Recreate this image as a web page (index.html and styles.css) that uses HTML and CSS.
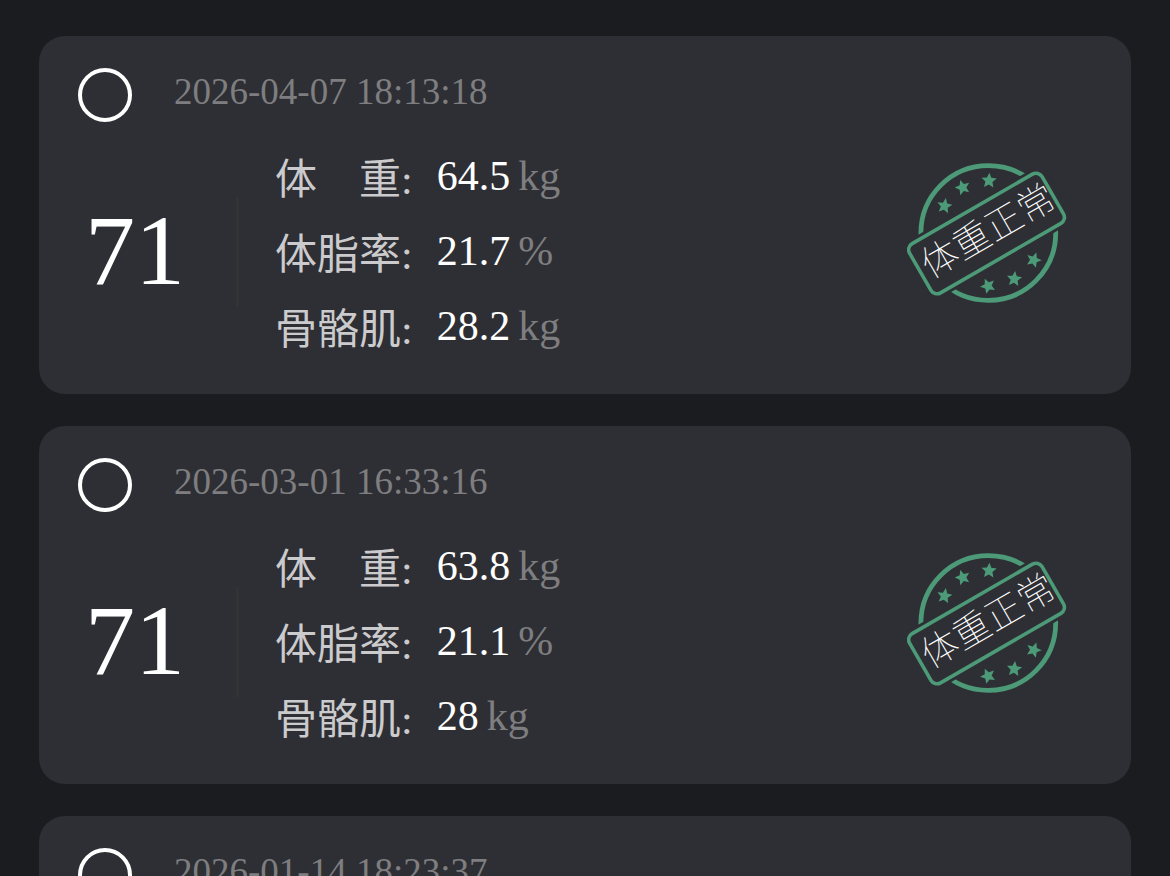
FILE: index.html
```
<!DOCTYPE html>
<html lang="zh-CN">
<head>
<meta charset="utf-8">
<meta name="viewport" content="width=device-width, initial-scale=1">
<title>体重记录</title>
<link rel="stylesheet" href="styles.css">
</head>
<body>
<svg class="defs" width="0" height="0" aria-hidden="true">
  <defs>
    <path id="star" d="M0-8 2.2-3 7.6-2.5 3.5 1.1 4.7 6.5 0 3.7-4.7 6.5-3.5 1.1-7.6-2.5-2.2-3Z"/>
    <symbol id="stamp" viewBox="0 0 160 142">
      <circle class="stamp-line" cx="81.3" cy="71" r="67.4" stroke-width="4.8"/>
      <g transform="rotate(-30 79.7 71.4)">
        <rect class="stamp-gap" x="-3" y="38.4" width="165.4" height="66"/>
        <rect class="stamp-line" x="3" y="43" width="153" height="56.8" rx="7" stroke-width="3.6"/>
        <text class="stamp-text" x="82" y="83" text-anchor="middle">体重正常</text>
      </g>
      <g class="stamp-stars">
        <use href="#star" transform="translate(82 18.7) rotate(3)"/>
        <use href="#star" transform="translate(55.7 25.5) rotate(-18)"/>
        <use href="#star" transform="translate(37.5 44) rotate(10)"/>
        <use href="#star" transform="translate(126.7 98) rotate(20)"/>
        <use href="#star" transform="translate(107.3 117) rotate(6)"/>
        <use href="#star" transform="translate(81 124) rotate(-24)"/>
      </g>
    </symbol>
  </defs>
</svg>
<main class="records">
  <article class="card">
    <header class="card-head">
      <input class="pick" type="radio" name="record" id="r1">
      <label class="date" for="r1">2026-04-07 18:13:18</label>
    </header>
    <div class="card-body">
      <div class="score">71</div>
      <dl class="metrics">
        <div class="row"><dt>体　重:</dt><dd>64.5<span class="unit">kg</span></dd></div>
        <div class="row"><dt>体脂率:</dt><dd>21.7<span class="unit">%</span></dd></div>
        <div class="row"><dt>骨骼肌:</dt><dd>28.2<span class="unit">kg</span></dd></div>
      </dl>
      <svg class="stamp" role="img" aria-label="体重正常"><use href="#stamp"/></svg>
    </div>
  </article>
  <article class="card">
    <header class="card-head">
      <input class="pick" type="radio" name="record" id="r2">
      <label class="date" for="r2">2026-03-01 16:33:16</label>
    </header>
    <div class="card-body">
      <div class="score">71</div>
      <dl class="metrics">
        <div class="row"><dt>体　重:</dt><dd>63.8<span class="unit">kg</span></dd></div>
        <div class="row"><dt>体脂率:</dt><dd>21.1<span class="unit">%</span></dd></div>
        <div class="row"><dt>骨骼肌:</dt><dd>28<span class="unit">kg</span></dd></div>
      </dl>
      <svg class="stamp" role="img" aria-label="体重正常"><use href="#stamp"/></svg>
    </div>
  </article>
  <article class="card">
    <header class="card-head">
      <input class="pick" type="radio" name="record" id="r3">
      <label class="date" for="r3">2026-01-14 18:23:37</label>
    </header>
  </article>
</main>
</body>
</html>
```
FILE: styles.css
```
* {
  box-sizing: border-box;
}

html,
body {
  height: 100%;
}

body {
  margin: 0;
  overflow: hidden;
  background: #1b1c1f;
  color: #fff;
  font-family: "Liberation Serif", "Noto Sans CJK SC", serif;
}

.defs {
  position: absolute;
}

.records {
  display: flex;
  flex-direction: column;
  gap: 32px;
  padding: 36px 39px;
}

.card {
  padding: 32px 64px 31px 39px;
  border-radius: 26px;
  background: #2e2f34;
}

.card-head {
  display: flex;
  align-items: flex-start;
  gap: 42px;
  height: 70px;
}

.pick {
  appearance: none;
  width: 54px;
  height: 54px;
  margin: 0;
  border: 4px solid #fff;
  border-radius: 50%;
}

.pick:checked {
  background: radial-gradient(#fff 50%, transparent 54%);
}

.date {
  color: #7e7e80;
  font-size: 37px;
  line-height: 48px;
}

.card-body {
  display: flex;
  align-items: center;
}

.score {
  width: 114px;
  font-size: 100px;
  line-height: 110px;
  text-align: center;
}

.metrics {
  display: flex;
  flex-direction: column;
  position: relative;
  margin: 0 0 0 44px;
  padding-left: 39px;
}

.metrics::before {
  content: "";
  position: absolute;
  left: 0;
  top: 59px;
  width: 3px;
  height: 110px;
  background: #333234;
}

.row {
  display: flex;
  align-items: center;
  gap: 24px;
  height: 75px;
  font-size: 42px;
  line-height: 48px;
}

.row dt {
  padding-top: 8px;
  color: #cbcbcd;
}

.row dd {
  margin: 0;
}

.unit {
  margin-left: 8px;
  color: #7e7e80;
}

.stamp {
  align-self: flex-start;
  width: 160px;
  height: 142px;
  margin: 24px 0 0 auto;
}

.stamp-line {
  fill: none;
  stroke: #4c9a77;
}

.stamp-gap {
  fill: #2e2f34;
}

.stamp-stars {
  fill: #4c9a77;
}

.stamp-text {
  fill: #fff;
  font-family: "Noto Sans CJK SC", sans-serif;
  font-size: 37px;
  font-weight: 100;
}
```
